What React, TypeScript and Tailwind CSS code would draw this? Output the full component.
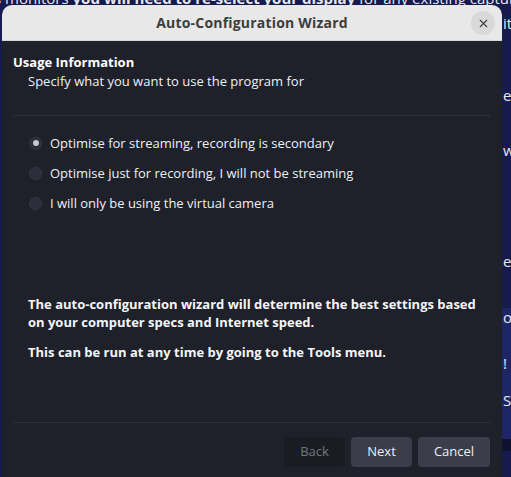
import { X } from 'lucide-react';

const options = [
  'Optimise for streaming, recording is secondary',
  'Optimise just for recording, I will not be streaming',
  'I will only be using the virtual camera',
];

// fragments of the window behind the dialog, one per row
const behind: { h: number; text: string; band?: boolean }[] = [
  { h: 14, text: '' },
  { h: 18, text: 'it' },
  { h: 54, text: '' },
  { h: 18, text: 'e.' },
  { h: 37, text: '' },
  { h: 18, text: 'ws' },
  { h: 93, text: '' },
  { h: 18, text: 'e' },
  { h: 38, text: '' },
  { h: 46, text: 'op', band: true },
  { h: 18, text: '!', band: true },
  { h: 19, text: '', band: true },
  { h: 18, text: 'S', band: true },
  { h: 30, text: '', band: true },
];

export default function App() {
  return (
    <div
      className="relative w-[511px] h-[477px] overflow-hidden bg-[#161a4c] text-white"
      style={{ fontFamily: '"Open Sans", "Noto Sans", sans-serif' }}
    >
      {/* page behind */}
      <div className="whitespace-nowrap text-[15px] leading-[18px] text-[#e6e8f0] -mt-[11px] -ml-[6px]">
        s monitors <b>you will need to re-select your display</b> for any existing capture
      </div>
      <div className="absolute top-0 right-0 w-[9px] flex flex-col">
        {behind.map((r, i) => (
          <div
            key={i}
            className={
              'whitespace-nowrap text-[15px] leading-[18px] text-[#e6e8f0] pl-[1px] ' +
              (r.band ? 'bg-[#1d2566]' : '')
            }
            style={{ height: r.h }}
          >
            {r.text}
          </div>
        ))}
        <div className="h-[12px] bg-[#0e1130]" />
      </div>

      {/* dialog */}
      <div className="absolute left-[2px] top-[5px] w-[500px] h-[480px] flex flex-col rounded-t-[10px] overflow-hidden">
        <div className="h-[36px] shrink-0 bg-[#e8e8e8] border-b border-[#d4d4d4] flex items-center justify-center relative">
          <span className="text-[14px] font-bold text-[#3d3d3d] tracking-[0.2px]">Auto-Configuration Wizard</span>
          <button className="absolute right-[7px] top-[6px] size-[24px] rounded-full bg-[#d9d9d9] flex items-center justify-center text-[#3d3d3d]">
            <X size={13} strokeWidth={2} />
          </button>
        </div>

        <div className="flex-1 bg-[#1f212a] flex flex-col pl-[11px] pr-[12px]">
          <div className="pt-[12px] text-[13px] font-bold leading-[18px]">Usage Information</div>
          <div className="pl-[15px] pt-[1px] text-[13px] leading-[18px] text-[#eef0f4]">
            Specify what you want to use the program for
          </div>
          <div className="mt-[25px] h-px bg-[#30333f]" />

          <div className="pl-[16px] pt-[18px] flex flex-col gap-[12px]">
            {options.map((o, i) => (
              <label key={i} className="flex items-center gap-[8px] text-[13px] leading-[18px] text-[#eef0f4]">
                <span className="size-[13px] rounded-full bg-[#2c2f3a] border border-[#353845] flex items-center justify-center">
                  {i === 0 && <span className="size-[6px] rounded-full bg-[#c8c9cc]" />}
                </span>
                {o}
              </label>
            ))}
          </div>

          <div className="pl-[15px] pt-[83px] text-[13px] font-bold leading-[18px] text-[#f4f5f8]">
            <p>The auto-configuration wizard will determine the best settings based</p>
            <p>on your computer specs and Internet speed.</p>
            <p className="mt-[12px]">This can be run at any time by going to the Tools menu.</p>
          </div>

          <div className="mt-[61px] h-px bg-[#2e313c] w-[477px]" />

          <div className="flex justify-end gap-[6px] pt-[14px] w-[477px]">
            <button className="w-[61px] h-[30px] rounded-[4px] bg-[#1a1c23] text-[13px] text-[#73767e]">Back</button>
            <button className="w-[61px] h-[30px] rounded-[4px] bg-[#3b3e4a] text-[13px] text-[#eef0f4]">Next</button>
            <button className="w-[72px] h-[30px] rounded-[4px] bg-[#3b3e4a] text-[13px] text-[#eef0f4]">Cancel</button>
          </div>
        </div>
      </div>
    </div>
  );
}
